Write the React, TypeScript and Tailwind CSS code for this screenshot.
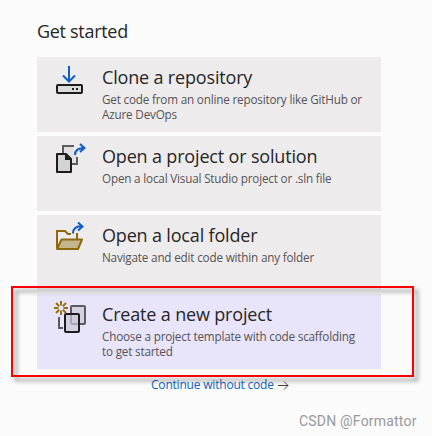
import type { ReactNode } from "react";

function CloneIcon() {
  return (
    <svg width="50" height="50" viewBox="0 0 50 50" fill="none">
      <path d="M24 11v15M18 20.500l6 6 6-6" stroke="#0f5fc2" strokeWidth="2" />
      <rect x="12" y="30" width="25" height="8" rx="1" fill="#dcdbdc" stroke="#1c1c1c" strokeWidth="2" />
      <path d="M27 33h2v2h-2zM31 33h2v2h-2z" fill="#1c1c1c" />
    </svg>
  );
}

function ProjectIcon() {
  return (
    <svg width="50" height="50" viewBox="0 0 50 50" fill="none">
      <path d="M18 12h9l5 8v10H18z" fill="#dcdadb" fillOpacity=".6" />
      <path d="M18 19v-7h11M32 23v7h-6" stroke="#5d5c5e" strokeWidth="2" />
      <path d="M12 20h9l5 5v13H12z" fill="#d4d3d4" stroke="#1c1c1c" strokeWidth="2" strokeLinejoin="round" />
      <path d="M20 20l6 6h-6z" fill="#1c1c1c" />
      <path d="M30 21c0-5 3-7 9-7M35 10l4.500 4-4.500 4" stroke="#0f5fc2" strokeWidth="2" />
    </svg>
  );
}

function FolderIcon() {
  return (
    <svg width="50" height="50" viewBox="0 0 50 50" fill="none">
      <path d="M12 35V18h8l3 3h3M32 20v6" stroke="#8d690c" strokeWidth="2" />
      <path d="M16.500 26.500H37L33 36H12z" fill="#c5b58d" stroke="#8d690c" strokeWidth="2" strokeLinejoin="round" />
      <path d="M28 20.500c0-5.500 3-7.500 9-7.500M33 9.500l4.500 4-4.500 4" stroke="#0f5fc2" strokeWidth="2" />
    </svg>
  );
}

function NewProjectIcon() {
  return (
    <svg width="50" height="50" viewBox="0 0 50 50" fill="none">
      <rect x="26" y="14" width="14" height="18" rx="1" fill="#d4d0df" stroke="#5b5963" strokeWidth="2" />
      <path d="M14 25v11h4" stroke="#5b5963" strokeWidth="2" />
      <rect x="20" y="22" width="14" height="18" rx="1" fill="#cbc8d6" fillOpacity=".7" stroke="#1c1c1f" strokeWidth="2" />
      <path
        d="M16 9v4.500M16 18.500V23M9 16h4.500M18.500 16H23M11 11l3.200 3.200M17.800 17.800L21 21M21 11l-3.200 3.200M14.200 17.800L11 21"
        stroke="#94700e"
        strokeWidth="2"
      />
    </svg>
  );
}

type Action = {
  icon: ReactNode;
  title: string;
  lines: string[];
  background: string;
};

const actions: Action[] = [
  {
    icon: <CloneIcon />,
    title: "Clone a repository",
    lines: ["Get code from an online repository like GitHub or", "Azure DevOps"],
    background: "bg-[#eeebec]",
  },
  {
    icon: <ProjectIcon />,
    title: "Open a project or solution",
    lines: ["Open a local Visual Studio project or .sln file"],
    background: "bg-[#eeebec]",
  },
  {
    icon: <FolderIcon />,
    title: "Open a local folder",
    lines: ["Navigate and edit code within any folder"],
    background: "bg-[#eeebec]",
  },
  {
    icon: <NewProjectIcon />,
    title: "Create a new project",
    lines: ["Choose a project template with code scaffolding", "to get started"],
    background: "bg-[#e8e4fa]",
  },
];

function ActionCard({ icon, title, lines, background }: Action) {
  return (
    <button className={`flex h-[75px] w-[344px] items-start text-left ${background}`}>
      <span className="ml-2 -mt-0.5 w-[57px] shrink-0">{icon}</span>
      <span className="flex flex-col whitespace-nowrap pt-2">
        <span className="text-[18px] leading-6 tracking-[-0.17px] text-[#262626]">{title}</span>
        <span className="mt-[3px] flex flex-col text-[11.700px] leading-[14.500px] tracking-[-0.18px] text-[#555355]">
          {lines.map((line) => (
            <span key={line}>{line}</span>
          ))}
        </span>
      </span>
    </button>
  );
}

export default function App() {
  return (
    <main className="relative h-[436px] w-[432px] overflow-hidden bg-[#fbfbfb] pl-[37px] font-['Open_Sans','Noto_Sans',sans-serif]">
      <h1 className="pt-[19px] text-[18px] leading-6 tracking-[-0.3px] text-[#262626]">Get started</h1>
      <div className="mt-3.5 flex flex-col gap-1">
        {actions.map((action) => (
          <ActionCard key={action.title} {...action} />
        ))}
      </div>
      <a className="ml-[114px] mt-2 flex h-4 items-center gap-1 whitespace-nowrap text-[12px] leading-4 tracking-[-0.2px] text-[#1066bf]">
        Continue without code
        <svg width="11" height="10" viewBox="0 0 11 10" fill="none" stroke="#444" strokeWidth="1">
          <path d="M0 5.500h10M6 1.500l4 4-4 4" />
        </svg>
      </a>
      <p className="ml-[262px] mt-[18px] whitespace-nowrap font-['Roboto',sans-serif] text-[14px] leading-5 tracking-[0.2px] text-[#999]">
        CSDN @Formattor
      </p>
      <div className="pointer-events-none absolute left-[11px] top-[286px] h-[91px] w-[403px] border-2 border-[#fb0000] drop-shadow-[4px_4px_2px_rgba(0,0,0,0.45)]" />
    </main>
  );
}
